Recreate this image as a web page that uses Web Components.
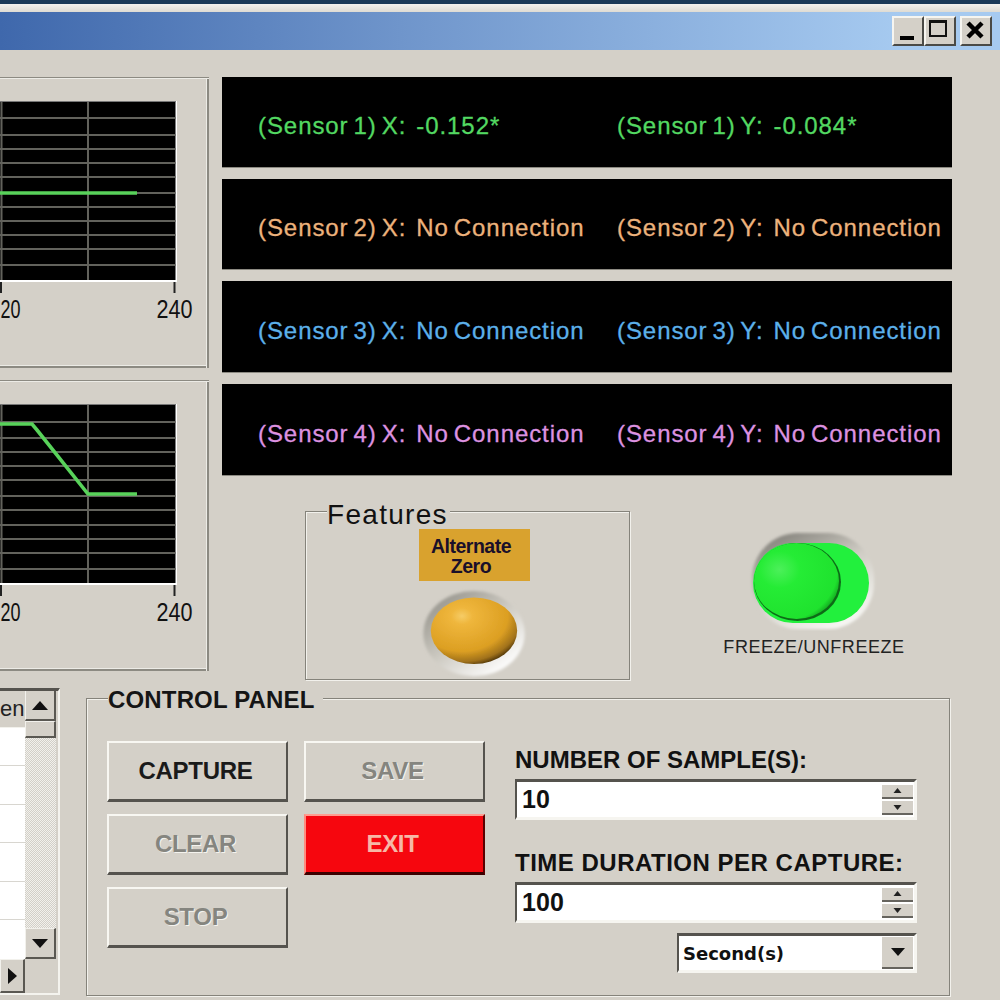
<!DOCTYPE html>
<html><head><meta charset="utf-8"><title>Sensor monitor</title>
<style>
html,body{margin:0;padding:0;background:#d4d0c8;height:1000px;overflow:hidden}
body{font-family:"Liberation Sans",Arial,sans-serif}
.top{display:grid;grid-template-columns:209px 730px;column-gap:13px;padding-top:27px;box-sizing:border-box;height:630px}
.left{display:flex;flex-direction:column;gap:12px}
.right{display:flex;flex-direction:column}
.sensors{display:grid;grid-template-rows:90px 90px 91px 91px;row-gap:12px}
.feat{display:flex;margin-top:17px;padding-left:83px;align-items:flex-start}
.bottom{display:flex;padding-top:4px}
.ctl{display:grid;grid-template-columns:181px 181px 416px;column-gap:16px;padding-left:20px}
.bcol{display:flex;flex-direction:column;gap:12.5px}
.fields{display:flex;flex-direction:column;width:402px;margin-left:14px;margin-top:6px}
</style>
</head><body>
<x-window>
  <div class="top">
    <div class="left">
      <x-chart lines="40,57,71,85,99,115,129,143,157,171,187" pts="0,116 137,116"></x-chart>
      <x-chart lines="41,57,71,85,99,115,129,144,158,172,188" pts="0,44 32,44 37,50 88,114 137,114"></x-chart>
    </div>
    <div class="right">
      <div class="sensors">
        <x-sensor color="#53d862" a="(Sensor 1) X:  -0.152*" b="(Sensor 1) Y:  -0.084*"></x-sensor>
        <x-sensor color="#ecb27c" a="(Sensor 2) X:  No Connection" b="(Sensor 2) Y:  No Connection"></x-sensor>
        <x-sensor color="#5cb0ea" a="(Sensor 3) X:  No Connection" b="(Sensor 3) Y:  No Connection"></x-sensor>
        <x-sensor color="#dd92e0" a="(Sensor 4) X:  No Connection" b="(Sensor 4) Y:  No Connection"></x-sensor>
      </div>
      <div class="feat">
        <x-features></x-features>
        <x-freeze></x-freeze>
      </div>
    </div>
  </div>
  <div class="bottom">
    <x-list></x-list>
    <x-group label="CONTROL PANEL">
      <div class="ctl">
        <div class="bcol">
          <x-button>CAPTURE</x-button>
          <x-button disabled>CLEAR</x-button>
          <x-button disabled>STOP</x-button>
        </div>
        <div class="bcol">
          <x-button disabled>SAVE</x-button>
          <x-button danger>EXIT</x-button>
        </div>
        <div class="fields">
          <x-spin label="NUMBER OF SAMPLE(S):" value="10" track="0"></x-spin>
          <x-spin label="TIME DURATION PER CAPTURE:" value="100" track=".5"></x-spin>
          <x-combo value="Second(s)"></x-combo>
        </div>
      </div>
    </x-group>
  </div>
</x-window>
<script>
function def(name, css, html){
  customElements.define(name, class extends HTMLElement{
    constructor(){super();this.attachShadow({mode:'open'});}
    connectedCallback(){
      const h = typeof html==='function'?html(this):html;
      this.shadowRoot.innerHTML='<style>'+css+'</style>'+h;
    }
  });
}
const FONT='"Liberation Sans",Arial,sans-serif';

def('x-window',`
:host{display:block;width:1000px;height:1000px;overflow:hidden;background:#d4d0c8}
.strip{height:4px;background:#1c3a58}
.edge{height:8px;background:linear-gradient(#f4f2ee,#dedbd3)}
.title{height:38px;display:flex;align-items:center;justify-content:flex-end;padding-right:8px;box-sizing:border-box;
 background:linear-gradient(90deg,#3f68ac 0,#6f95cb 40%,#a6caf0 90%)}
.gap{width:4px}
`,`<div class="strip"></div><div class="edge"></div>
<div class="title"><x-tbtn kind="min"></x-tbtn><x-tbtn kind="max"></x-tbtn><div class="gap"></div><x-tbtn kind="close"></x-tbtn></div>
<slot></slot>`);

def('x-tbtn',`
:host{display:block;width:32px;height:30px;box-sizing:border-box;background:#d4d0c8;
 border-top:2px solid #f6f5f0;border-left:2px solid #f6f5f0;border-right:2px solid #4a4a46;border-bottom:2px solid #4a4a46}
svg{display:block}
`,el=>{
 const k=el.getAttribute('kind');
 const g=k==='min'?'<rect x="6" y="18" width="14" height="4" fill="#000"/>'
  :k==='max'?'<rect x="4" y="3" width="16" height="15" fill="none" stroke="#111" stroke-width="2"/><rect x="4" y="2" width="16" height="3" fill="#111"/>'
  :'<path d="M6 5 L20 19 M20 5 L6 19" stroke="#000" stroke-width="4.5"/>';
 return '<svg width="28" height="26" viewBox="0 0 28 26">'+g+'</svg>';
});

def('x-chart',`
:host{display:block;width:209px;height:291px;box-shadow:inset 0 1px 0 #8c8a82,inset 0 2px 0 #ecebe6,inset -2px 0 0 #8c8a82,inset -3px 0 0 #ecebe6,inset 0 -2px 0 #8c8a82,inset 0 -3px 0 #ecebe6}
svg{display:block}
text{font-family:${FONT};font-size:24px;fill:#111}
`,el=>{
 const lines=el.getAttribute('lines').split(',').map(Number);
 const pts=el.getAttribute('pts');
 let s='<svg width="209" height="291" viewBox="0 0 209 291">';
 s+='<rect x="0" y="24" width="177" height="181" fill="#fff"/><rect x="0" y="25" width="175.5" height="178" fill="#000"/>';
 s+='<rect x="0" y="24" width="176" height="1" fill="#777"/>';
 lines.forEach(y=>s+=`<rect x="0" y="${y}" width="175.5" height="2" fill="#62625c"/>`);
 s+='<rect x="0.5" y="25" width="2" height="178" fill="#62625c"/><rect x="87" y="25" width="2" height="178" fill="#62625c"/>';
 s+=`<polyline points="${pts}" fill="none" stroke="#58d25a" stroke-width="3.6"/>`;
 s+='<rect x="0" y="205" width="2" height="11" fill="#222"/><rect x="173.5" y="205" width="2" height="11" fill="#222"/>';
 s+='<text transform="translate(20.5,241) scale(.75,1.05)" text-anchor="end">20</text>';
 s+='<text transform="translate(174.5,241) scale(.9,1.05)" text-anchor="middle">240</text>';
 return s+'</svg>';
});

def('x-sensor',`
:host{display:grid;grid-template-columns:359px 1fr;align-items:center;background:#000;padding:8px 0 0 36px;box-sizing:border-box;
 font:24px ${FONT};letter-spacing:.93px;word-spacing:-2.6px;white-space:pre;box-shadow:0 1px 0 #8c8a82;overflow:hidden;-webkit-text-stroke:.3px currentColor}
span{color:var(--c)}
`,el=>{
 el.style.setProperty('--c',el.getAttribute('color'));
 return `<span>${el.getAttribute('a')}</span><span>${el.getAttribute('b')}</span>`;
});

def('x-features',`
:host{display:block;width:325px;height:188px}
fieldset{margin:0;padding:0;height:100%;box-sizing:border-box;border:1px solid #85837b;box-shadow:inset 1px 1px 0 #f2f1ec,1px 1px 0 #f2f1ec;
 display:flex;flex-direction:column;align-items:center}
legend{margin-left:21px;padding:8px 0 0 0;font:28px/30px ${FONT};letter-spacing:1.3px;color:#111;background:#d4d0c8;width:123px;white-space:nowrap}
.tag{width:111px;height:52px;background:#d9a22e;box-sizing:border-box;padding:7px 6px 0 0;margin-top:-1px;margin-left:13px;text-align:center;
 font:bold 19.5px/20px ${FONT};letter-spacing:-.5px;color:#1a0f2a}
svg{display:block;margin-top:3px;margin-left:13px}
`,`<fieldset><legend>Features</legend>
<div class="tag">Alternate<br>Zero</div>
<svg width="120" height="96" viewBox="0 0 120 96">
<defs>
<radialGradient id="o" cx=".36" cy=".28" r=".78"><stop offset="0" stop-color="#f6cc66"/><stop offset=".16" stop-color="#efb63c"/><stop offset=".68" stop-color="#dc9f22"/><stop offset=".88" stop-color="#a0711a"/><stop offset="1" stop-color="#3f2a06"/></radialGradient>
<linearGradient id="ring" x1=".15" y1=".1" x2=".85" y2=".9"><stop offset="0" stop-color="#9a9890"/><stop offset=".5" stop-color="#cfccc4"/><stop offset="1" stop-color="#ffffff"/></linearGradient>
<filter id="b1"><feGaussianBlur stdDeviation="1.6"/></filter><filter id="b2"><feGaussianBlur stdDeviation=".7"/></filter>
</defs>
<ellipse cx="60" cy="50" rx="51" ry="43" fill="url(#ring)" filter="url(#b1)"/>
<ellipse cx="60" cy="47" rx="43.5" ry="33.5" fill="url(#o)" filter="url(#b2)"/>
</svg></fieldset>`);

def('x-freeze',`
:host{display:flex;flex-direction:column;align-items:center;width:182px;margin-left:93px;margin-top:39px;
 font:18px/20px ${FONT};letter-spacing:.55px;color:#222;white-space:nowrap}
svg{display:block}
span{margin-top:6px}
`,`<svg width="130" height="100" viewBox="0 0 130 100">
<defs>
<radialGradient id="g" cx=".3" cy=".35" r=".8"><stop offset="0" stop-color="#4cf05a"/><stop offset=".3" stop-color="#25ec35"/><stop offset=".85" stop-color="#1fe22e"/><stop offset="1" stop-color="#0c8a18"/></radialGradient>
<linearGradient id="rg" x1=".2" y1="0" x2=".8" y2="1"><stop offset="0" stop-color="#83817a"/><stop offset=".45" stop-color="#cfccc4"/><stop offset="1" stop-color="#fbfbf8"/></linearGradient>
<filter id="fb"><feGaussianBlur stdDeviation="1.8"/></filter><filter id="fs"><feGaussianBlur stdDeviation=".6"/></filter>
</defs>
<rect x="3" y="2" width="122" height="96" rx="46" fill="url(#rg)" filter="url(#fb)"/>
<rect x="4" y="12" width="116" height="80" rx="40" fill="#20f03c" filter="url(#fs)"/>
<ellipse cx="48.5" cy="51" rx="43.5" ry="39" fill="#0a6a16" filter="url(#fs)"/>
<ellipse cx="47.5" cy="50" rx="42.5" ry="38" fill="url(#g)"/>
</svg><span>FREEZE/UNFREEZE</span>`);

def('x-group',`
:host{display:block;margin-left:26px;width:864px;height:312px}
fieldset{margin:0;padding:29px 0 0 0;height:100%;box-sizing:border-box;border:1px solid #85837b;box-shadow:inset 1px 1px 0 #f2f1ec,1px 1px 0 #f2f1ec}
legend{margin-left:21px;padding:3px 8px 0 0;background:#d4d0c8;font:bold 24px/25px ${FONT};letter-spacing:.16px;color:#151515;white-space:nowrap}
`,el=>`<fieldset><legend>${el.getAttribute('label')}</legend><slot></slot></fieldset>`);

def('x-button',`
:host{display:flex;align-items:center;justify-content:center;height:60.5px;box-sizing:border-box;background:#d4d0c8;padding-right:4px;
 border-top:2px solid #f8f7f2;border-left:2px solid #f8f7f2;border-right:2px solid #55534e;border-bottom:3px solid #55534e;
 font:bold 24px ${FONT};letter-spacing:-.3px;color:#1a1a1a}
:host([disabled]){color:#85857f;text-shadow:1px 1px 0 #f4f3ee}
:host([danger]){background:#f6060e;color:#f6b8a6;border-top-color:#ff9c90;border-left-color:#ff8c80;border-right-color:#5a0000;border-bottom-color:#3c0000}
`,`<slot></slot>`);

const sunken=`box-sizing:border-box;background:#fff;border-top:3px solid #55534e;border-left:2px solid #55534e;border-right:3px solid #f6f5f0;border-bottom:3px solid #f6f5f0;`;
const sbtn=`background:#d4d0c8;box-sizing:border-box;`;

def('x-spin',`
:host{display:block;font:bold 24px ${FONT};color:#111}
.lab{height:26px;line-height:26px;white-space:nowrap;margin-bottom:6px}
.box{width:402px;height:41px;${sunken}display:flex;align-items:center;justify-content:space-between;padding:0 1px 0 5px;margin-bottom:30px}
.v{letter-spacing:.1px;font-size:25px}
.sp{width:31px;display:flex;flex-direction:column;gap:2px}
.sp svg{display:block;background:#d4d0c8;border-bottom:2px solid #66645e}
`,el=>`<div class="lab" style="letter-spacing:${el.getAttribute('track')}px">${el.getAttribute('label')}</div>
<div class="box"><span class="v">${el.getAttribute('value')}</span><div class="sp">
<svg width="31" height="12" viewBox="0 0 31 12"><path d="M15.5 3l4 5h-8z" fill="#222"/></svg>
<svg width="31" height="12" viewBox="0 0 31 12"><path d="M15.5 9l4-5h-8z" fill="#222"/></svg>
</div></div>`);

def('x-combo',`
:host{display:flex;align-self:flex-end;align-items:center;justify-content:space-between;width:240px;height:40px;margin-top:-20px;${sunken}padding:0 1px 0 4px;
 font:bold 18px "DejaVu Sans",sans-serif;color:#111}
.dd{width:31px;height:32px;${sbtn}border-bottom:2px solid #66645e;display:flex;align-items:center;justify-content:center}
`,el=>`<span>${el.getAttribute('value')}</span><div class="dd"><svg width="16" height="10" viewBox="0 0 16 10"><path d="M1 1h14l-7 8z" fill="#111"/></svg></div>`);

def('x-list',`
:host{display:grid;width:60px;height:307px;margin-top:4px;box-sizing:border-box;border-top:3px solid #55534e;border-right:2px solid #f4f3ee;border-bottom:2px solid #f4f3ee;
 grid-template-columns:25px 31px 2px;grid-template-rows:268px 34px;font:22px ${FONT};color:#222}
.cells{display:flex;flex-direction:column;background:#fff}
.hd{height:37px;flex:none;background:#d4d0c8;box-sizing:border-box;padding-top:5px;text-align:right;padding-right:1px;line-height:26px;border-bottom:1px solid #f2f1ec;overflow:hidden}
.r{background:#fff;border-bottom:1px solid #d8d6d0;box-sizing:border-box;height:38.4px;flex:none}
.fill{flex:1;background:#fff}
.sb{display:flex;flex-direction:column;background-color:#e6e4de;background-image:repeating-conic-gradient(#d2cfc8 0 25%,#f2f1ec 0 50%);background-size:2px 2px}
.b{${sbtn}border-top:1px solid #f2f1ec;border-left:1px solid #f2f1ec;border-right:2px solid #5a5852;border-bottom:2px solid #5a5852;display:flex;align-items:center;justify-content:center;flex:none}
.u{height:30px;border-top:0}.th{height:17px}.sp{flex:1}.d{height:31px}
.ra{grid-column:1}
.corner{background:#d4d0c8}
svg{display:block}
.w{background:#d4d0c8;grid-row:1/3;grid-column:3}
`,`<div class="cells"><div class="hd">en</div><div class="r"></div><div class="r"></div><div class="r"></div><div class="r"></div><div class="r"></div><div class="fill"></div></div>
<div class="sb"><div class="b u"><svg width="16" height="9" viewBox="0 0 16 9"><path d="M8 0l8 9H0z" fill="#111"/></svg></div><div class="b th"></div><div class="sp"></div><div class="b d"><svg width="16" height="9" viewBox="0 0 16 9"><path d="M8 9l8-9H0z" fill="#111"/></svg></div></div>
<div class="w"></div>
<div class="b ra"><svg width="9" height="16" viewBox="0 0 9 16"><path d="M9 8L0 0v16z" fill="#111"/></svg></div><div class="corner"></div>`);
</script>
</body></html>
